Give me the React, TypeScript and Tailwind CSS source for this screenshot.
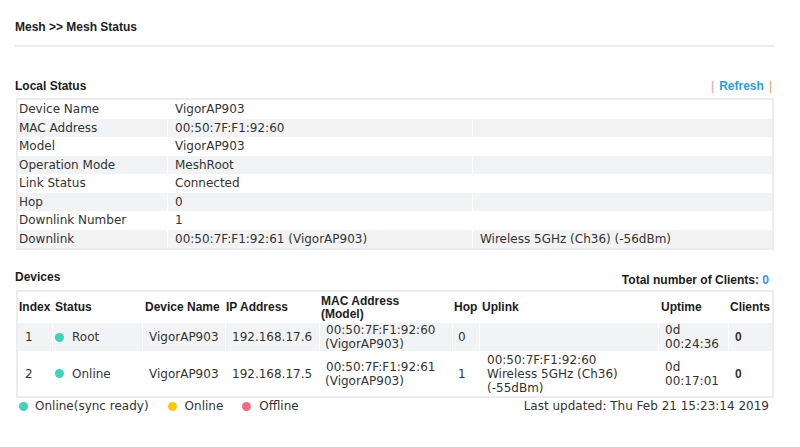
import React from "react";

const body = "font-['DejaVu_Sans','Verdana',sans-serif] text-[12px] text-[#333]";
const head = "font-['Liberation_Sans','Arial',sans-serif] font-bold text-[12px] text-[#1c1c1c]";

const localRows: [string, string, string][] = [
  ["Device Name", "VigorAP903", ""],
  ["MAC Address", "00:50:7F:F1:92:60", ""],
  ["Model", "VigorAP903", ""],
  ["Operation Mode", "MeshRoot", ""],
  ["Link Status", "Connected", ""],
  ["Hop", "0", ""],
  ["Downlink Number", "1", ""],
  ["Downlink", "00:50:7F:F1:92:61 (VigorAP903)", "Wireless 5GHz (Ch36) (-56dBm)"],
];

function Dot({ color }: { color: string }) {
  return <span className={`inline-block w-[9px] h-[9px] rounded-full ${color}`} />;
}

export default function App() {
  return (
    <div className="w-[800px] h-[447px] bg-white overflow-hidden">
      <div className="ml-[15px] w-[760px]">
        {/* breadcrumb */}
        <div className={`${head} text-[10.6px] pt-[18px] h-[47px] border-b-2 border-[#ececec]`}>
          Mesh &gt;&gt; Mesh Status
        </div>

        {/* Local status */}
        <div className="mt-[34px] flex items-end justify-between pr-[3px] h-[14px]">
          <span className={head}>Local Status</span>
          <span className={`${head} text-[#2a9de0] flex items-center gap-[5px]`}>
            <span className="font-normal text-[#f39aa0]">|</span>
            <span>Refresh</span>
            <span className="font-normal text-[#f29a50]">|</span>
          </span>
        </div>
        <div className={`${body} text-[12.3px] mt-[3px] ml-px w-[758px] border-2 border-[#ececec]`}>
          {localRows.map(([k, v, x], i) => {
            const bg = i % 2 === 1 ? "bg-[#f2f3f5]" : "bg-white";
            return (
              <div key={k} className="flex h-[18.5px] items-center">
                <div className={`${bg} w-[149px] h-full pl-[1px] flex items-center`}>{k}</div>
                <div className={`${bg} ml-px w-[304px] h-full pl-[7px] flex items-center`}>{v}</div>
                <div className={`${bg} ml-px flex-1 h-full pl-[7px] flex items-center`}>{x}</div>
              </div>
            );
          })}
        </div>

        {/* Devices */}
        <div className="mt-[18px] flex items-start justify-between pr-[6px]">
          <span className={head}>Devices</span>
          <span className={`${head} mt-[3px]`}>
            Total number of Clients: <span className="text-[#2a9de0]">0</span>
          </span>
        </div>
        <div className={`${body} mt-[1px] ml-px w-[758px] border-2 border-[#ececec]`}>
          <div className={`${head} flex h-[31px] items-center leading-[13px]`}>
            <div className="w-[34px] pl-[1px]">Index</div>
            <div className="ml-px w-[89px] pl-[2px]">Status</div>
            <div className="ml-px w-[82px] pl-[2px]">Device Name</div>
            <div className="ml-px w-[93px]">IP Address</div>
            <div className="ml-px w-[132px] pl-[1px]">
              MAC Address
              <br />
              (Model)
            </div>
            <div className="ml-px w-[26px] pl-[1px]">Hop</div>
            <div className="ml-px w-[178px] pl-[2px]">Uplink</div>
            <div className="ml-px w-[69px] pl-[2px]">Uptime</div>
            <div className="ml-px flex-1 pl-[1px]">Clients</div>
          </div>
          <DeviceRow
            bg="bg-[#f2f3f5]"
            h="h-[28px]"
            idx="1"
            status="Root"
            ip="192.168.17.6"
            mac="00:50:7F:F1:92:60"
            hop="0"
            uplink={[]}
            uptime="00:24:36"
          />
          <DeviceRow
            bg="bg-white"
            h="h-[45px]"
            idx="2"
            status="Online"
            ip="192.168.17.5"
            mac="00:50:7F:F1:92:61"
            hop="1"
            uplink={["00:50:7F:F1:92:60", "Wireless 5GHz (Ch36)", "(-55dBm)"]}
            uptime="00:17:01"
          />
        </div>

        {/* legend */}
        <div className={`${body} flex items-center justify-between -mt-[1px] pl-[4px] pr-[6px]`}>
          <div className="flex items-center">
            <Dot color="bg-[#3bd4b4]" />
            <span className="ml-[7px]">Online(sync ready)</span>
            <span className="ml-[19px]" />
            <Dot color="bg-[#ffc60a]" />
            <span className="ml-[8px]">Online</span>
            <span className="ml-[19px]" />
            <Dot color="bg-[#f76a7c]" />
            <span className="ml-[8px]">Offline</span>
          </div>
          <span>Last updated: Thu Feb 21 15:23:14 2019</span>
        </div>
      </div>
    </div>
  );
}

function DeviceRow(p: {
  bg: string;
  h: string;
  idx: string;
  status: string;
  ip: string;
  mac: string;
  hop: string;
  uplink: string[];
  uptime: string;
}) {
  const c = `${p.bg} h-full flex items-center`;
  return (
    <div className={`flex ${p.h} leading-[14px]`}>
      <div className={`${c} w-[34px] pl-[7px]`}>{p.idx}</div>
      <div className={`${c} ml-px w-[89px] pl-[2px] gap-[8px]`}>
        <Dot color="bg-[#3bd4b4]" />
        {p.status}
      </div>
      <div className={`${c} ml-px w-[82px] pl-[6px]`}>VigorAP903</div>
      <div className={`${c} ml-px w-[93px] pl-[6px]`}>{p.ip}</div>
      <div className={`${c} ml-px w-[132px] pl-[5px]`}>
        <div>
          <div className="pl-px">{p.mac}</div>
          <div>(VigorAP903)</div>
        </div>
      </div>
      <div className={`${c} ml-px w-[26px] pl-[5px]`}>{p.hop}</div>
      <div className={`${c} ml-px w-[178px] pl-[7px]`}>
        <div>
          {p.uplink.map((l) => (
            <div key={l}>{l}</div>
          ))}
        </div>
      </div>
      <div className={`${c} ml-px w-[69px] pl-[6px]`}>
        <div>
          <div>0d</div>
          <div>{p.uptime}</div>
        </div>
      </div>
      <div className={`${c} ml-px flex-1 pl-[6px] font-['Liberation_Sans',Arial,sans-serif] font-bold`}>0</div>
    </div>
  );
}
